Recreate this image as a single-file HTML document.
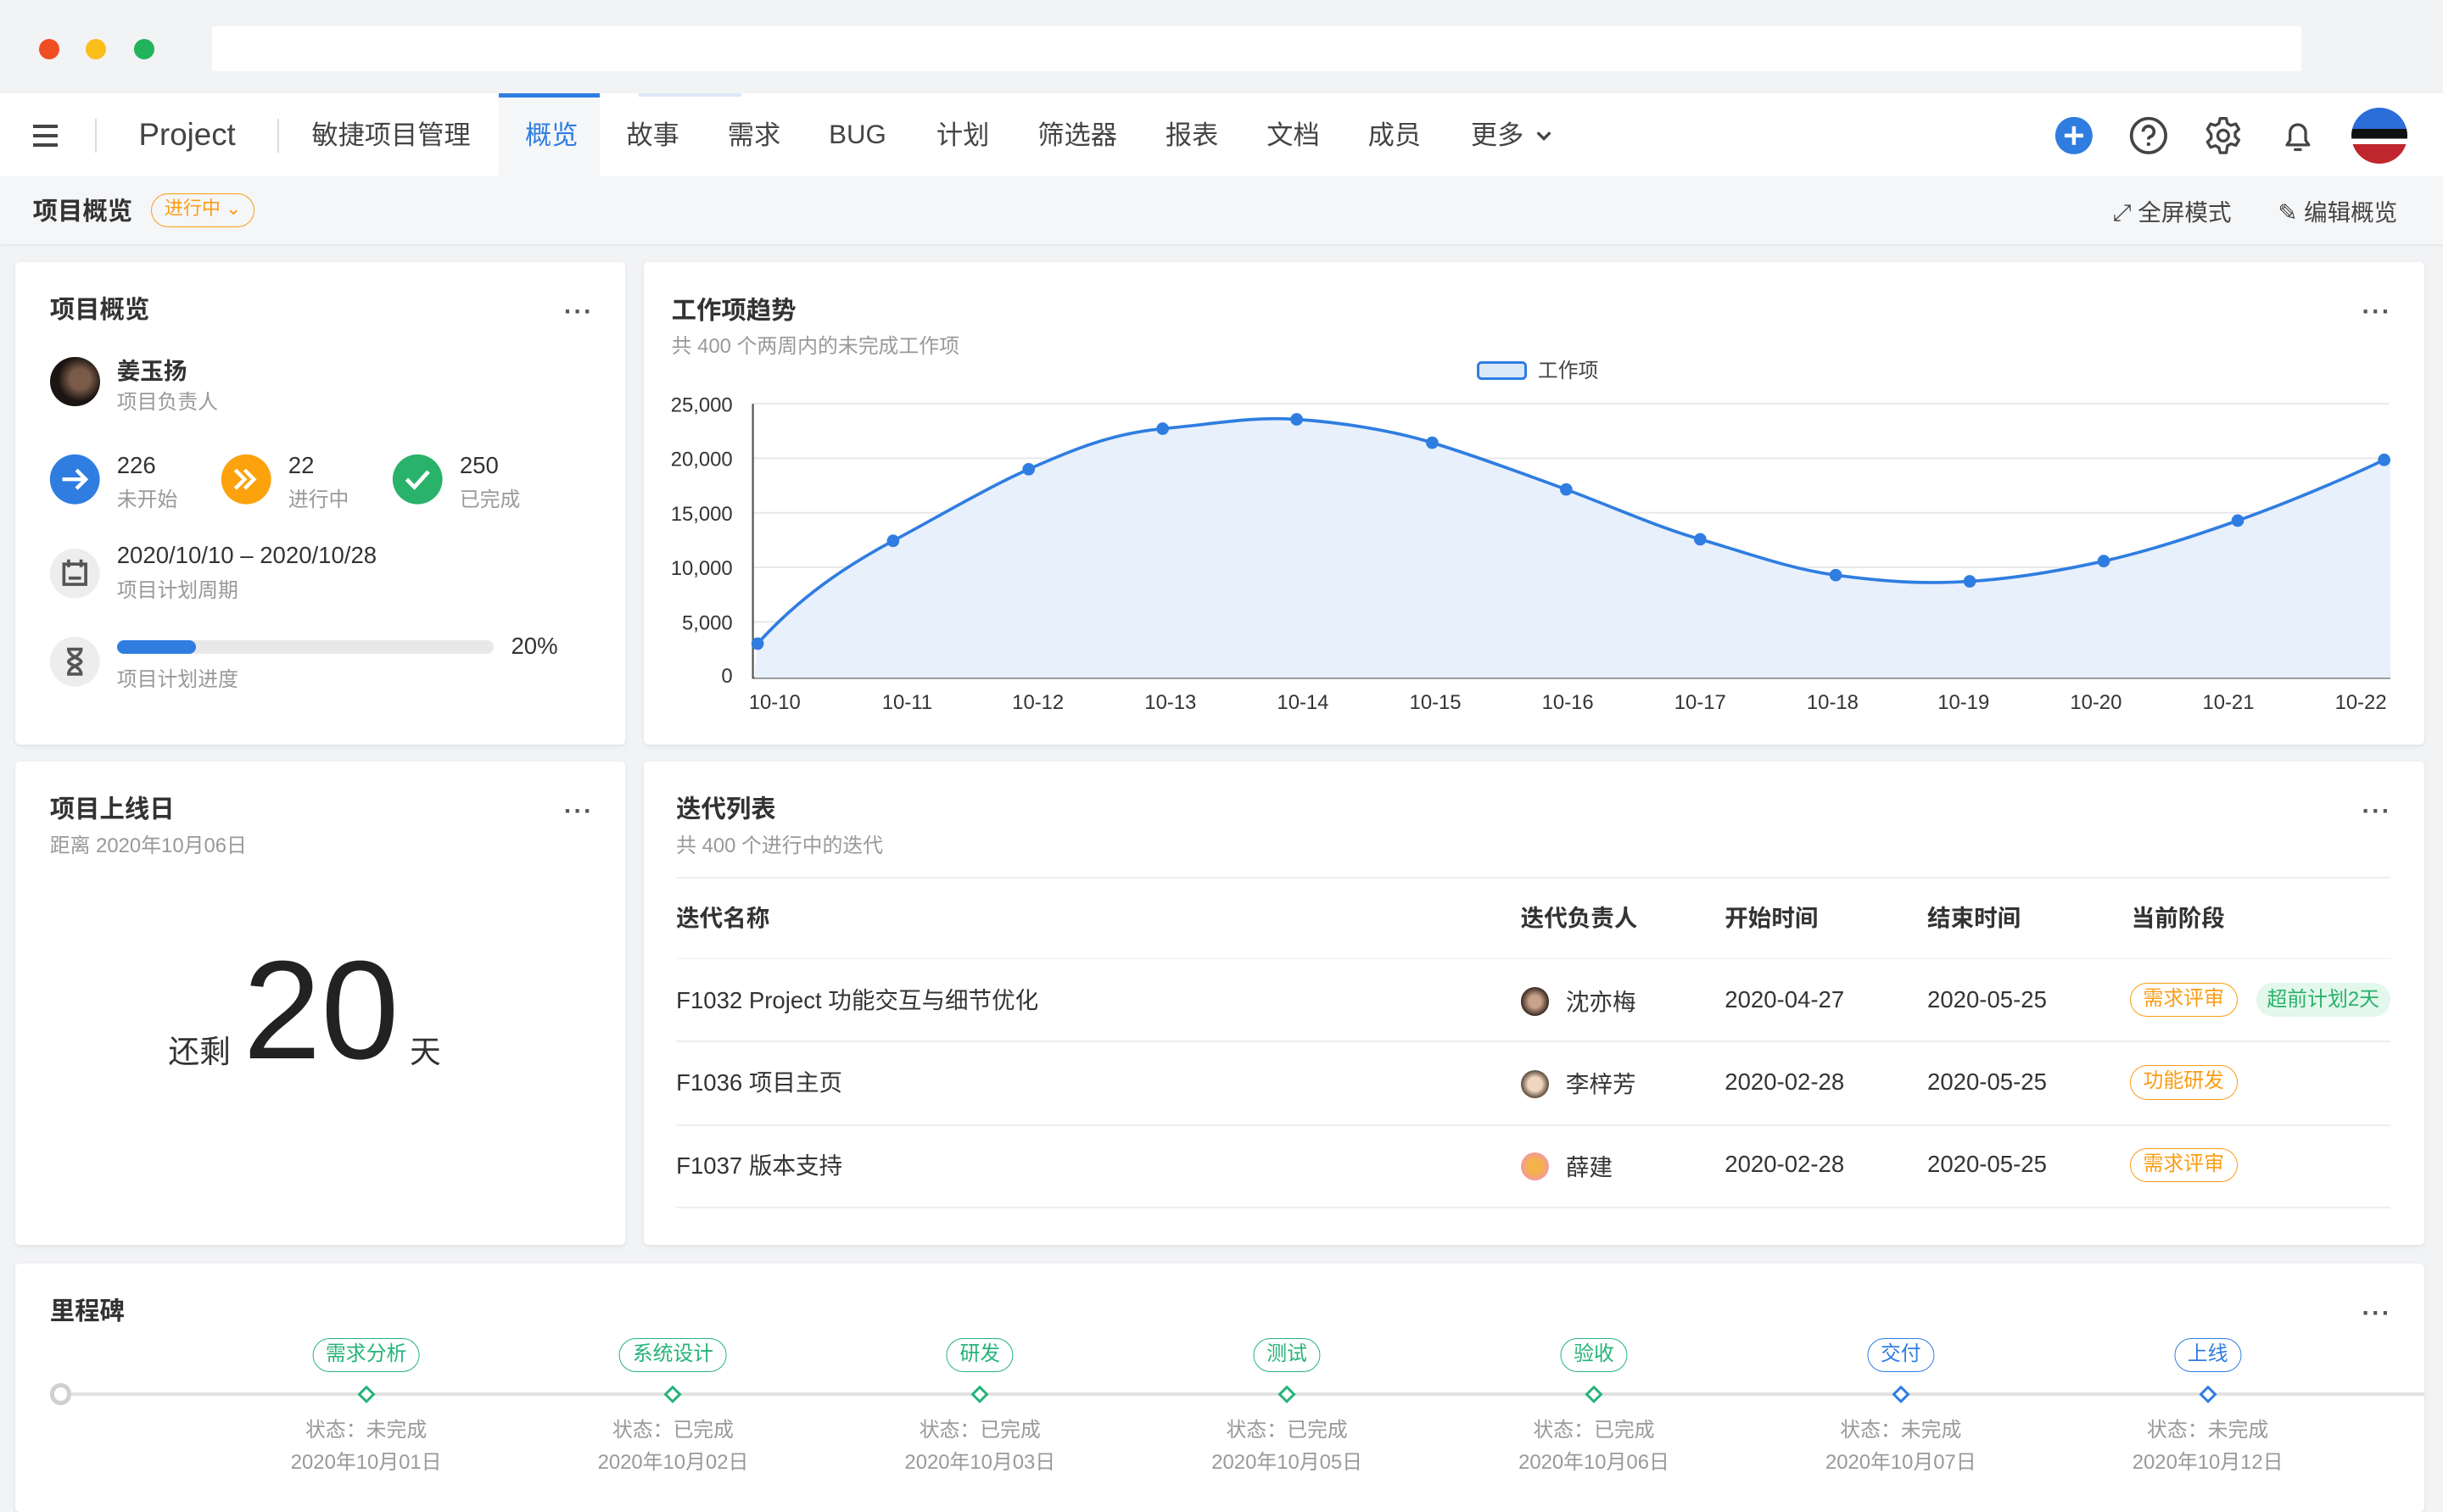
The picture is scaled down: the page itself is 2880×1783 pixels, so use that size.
<!DOCTYPE html>
<html><head><meta charset="utf-8">
<style>
html{zoom:1.83674}
*{box-sizing:border-box;margin:0;padding:0}
body{width:1568px;height:951px;overflow:hidden;background:#f2f3f5;font-family:"Liberation Sans","Noto Sans CJK SC",sans-serif;color:#333;position:relative}
.a{position:absolute}
.card{position:absolute;background:#fff;border-radius:3px;box-shadow:0 1px 3px rgba(0,0,0,.08)}
.dots{position:absolute;font-size:16px;color:#555;letter-spacing:1px;font-weight:bold}
.t{position:absolute;white-space:nowrap}
.sub{color:#999;font-size:13px}
.tag{position:absolute;border:1px solid #fa9d14;color:#fa9d14;border-radius:11px;font-size:13px;height:22px;line-height:20px;padding:0 8px;white-space:nowrap}
.ms{position:absolute;border:1px solid #25b37a;color:#25b37a;border-radius:11px;font-size:13px;height:22px;line-height:20px;padding:0 8px;transform:translateX(-50%);white-space:nowrap;background:#fff}
.ms.b{border-color:#2f7de1;color:#2f7de1}
.dia{position:absolute;width:8px;height:8px;border:2px solid #25b37a;background:#fff;transform:translate(-50%,-50%) rotate(45deg)}
.dia.b{border-color:#2f7de1}
.mt{position:absolute;transform:translateX(-50%);color:#999;font-size:13px;text-align:center;white-space:nowrap;line-height:21px}
</style></head><body>
<div class="a" style="left:25px;top:25px;width:13px;height:13px;border-radius:50%;background:#f04d23"></div>
<div class="a" style="left:55px;top:25px;width:13px;height:13px;border-radius:50%;background:#fbbd18"></div>
<div class="a" style="left:86px;top:25px;width:13px;height:13px;border-radius:50%;background:#22b35c"></div>
<div class="a" style="left:136px;top:17px;width:1341px;height:29px;background:#fff"></div>
<div class="a" style="left:0;top:60px;width:1568px;height:53px;background:#fff"></div>
<div class="a" style="left:21px;top:80px;width:16px;height:2px;background:#444;box-shadow:0 6px 0 #444,0 12px 0 #444"></div>
<div class="a" style="left:61px;top:76px;width:1px;height:22px;background:#ddd"></div>
<div class="t" style="left:89px;top:75px;font-size:20px;color:#444">Project</div>
<div class="a" style="left:178px;top:76px;width:1px;height:22px;background:#ddd"></div>
<div class="a" style="left:320px;top:60px;width:65px;height:53px;background:#f5f6f8;border-top:3px solid #2f7de1"></div>
<div class="a" style="left:410px;top:60px;width:66px;height:2px;background:#dce8f8"></div>
<div class="t" style="top:73px;font-size:17px;color:#444;left:200px">敏捷项目管理</div>
<div class="t" style="top:73px;font-size:17px;color:#2f7de1;left:337px">概览</div>
<div class="t" style="top:73px;font-size:17px;color:#444;left:402px">故事</div>
<div class="t" style="top:73px;font-size:17px;color:#444;left:467px">需求</div>
<div class="t" style="top:77px;font-size:17px;color:#444;left:532px">BUG</div>
<div class="t" style="top:73px;font-size:17px;color:#444;left:601px">计划</div>
<div class="t" style="top:73px;font-size:17px;color:#444;left:666px">筛选器</div>
<div class="t" style="top:73px;font-size:17px;color:#444;left:748px">报表</div>
<div class="t" style="top:73px;font-size:17px;color:#444;left:813px">文档</div>
<div class="t" style="top:73px;font-size:17px;color:#444;left:878px">成员</div>
<div class="t" style="top:73px;font-size:17px;color:#444;left:944px">更多</div>
<svg class="a" style="left:985px;top:81px" width="12" height="12"><path d="M2 4l4 4 4-4" fill="none" stroke="#444" stroke-width="1.8"/></svg>
<svg class="a" style="left:1318px;top:74px" width="26" height="26"><circle cx="13" cy="13" r="12" fill="#2f7de1"/><path d="M13 7v12M7 13h12" stroke="#fff" stroke-width="2.4"/></svg>
<svg class="a" style="left:1366px;top:74px" width="26" height="26"><circle cx="13" cy="13" r="11" fill="none" stroke="#444" stroke-width="2"/><path d="M9.5 10.5a3.5 3.5 0 1 1 4.5 3.3c-.8.3-1 .8-1 1.7" fill="none" stroke="#444" stroke-width="2"/><circle cx="13" cy="18.5" r="1.2" fill="#444"/></svg>
<svg class="a" style="left:1414px;top:74px" width="26" height="26" viewBox="0 0 26 26"><path d="M11 2h4l.7 3.2 2.3 1.3 3.1-1 2 3.4-2.4 2.2v2.6l2.4 2.2-2 3.4-3.1-1-2.3 1.3L15 24h-4l-.7-3.2-2.3-1.3-3.1 1-2-3.4 2.4-2.2v-2.6L2.9 8.9l2-3.4 3.1 1 2.3-1.3z" fill="none" stroke="#444" stroke-width="1.8" stroke-linejoin="round"/><circle cx="13" cy="13" r="3.5" fill="none" stroke="#444" stroke-width="1.8"/></svg>
<svg class="a" style="left:1462px;top:74px" width="26" height="26"><path d="M6 19h14l-2-3v-5a5 5 0 0 0-10 0v5z" fill="none" stroke="#444" stroke-width="1.8" stroke-linejoin="round"/><path d="M10.5 22h5" stroke="#444" stroke-width="1.8"/></svg>
<div class="a" style="left:1509px;top:69px;width:36px;height:36px;border-radius:50%;background:linear-gradient(#2b6ed8 0 38%,#111 38% 55%,#fff 55% 65%,#c0262d 65%)"></div>
<div class="a" style="left:0;top:113px;width:1568px;height:44px;background:#f5f6f8;box-shadow:0 1px 2px rgba(0,0,0,.06)"></div>
<div class="t" style="left:21px;top:123px;font-size:16px;font-weight:bold;color:#333">项目概览</div>
<div class="tag" style="left:97px;top:124px;height:22px;font-size:12px;line-height:18px">进行中 ⌄</div>
<div class="t" style="left:1356px;top:124px;font-size:15px;color:#444">⤢ 全屏模式</div>
<div class="t" style="left:1462px;top:124px;font-size:15px;color:#444">✎ 编辑概览</div>

<div class="card" style="left:10px;top:168px;width:391px;height:310px">
<div class="t" style="left:22px;top:18px;font-size:16px;font-weight:bold">项目概览</div>
<div class="dots" style="left:352px;top:23px">···</div>
<div class="a" style="left:22px;top:61px;width:32px;height:32px;border-radius:50%;background:radial-gradient(circle at 60% 45%,#7a5a48 0 25%,#1a1512 55%)"></div>
<div class="t" style="left:65px;top:58px;font-size:15px;font-weight:bold">姜玉扬</div>
<div class="t sub" style="left:65px;top:79px">项目负责人</div>
<svg class="a" style="left:21px;top:123px" width="34" height="34"><circle cx="17" cy="17" r="16" fill="#2f7de1"/><path d="M9 17h15M18 11l6 6-6 6" fill="none" stroke="#fff" stroke-width="2.4"/></svg>
<div class="t" style="left:65px;top:122px;font-size:15px">226</div><div class="t sub" style="left:65px;top:142px">未开始</div>
<svg class="a" style="left:131px;top:123px" width="34" height="34"><circle cx="17" cy="17" r="16" fill="#fba20d"/><path d="M10 11l6 6-6 6M16 11l6 6-6 6" fill="none" stroke="#fff" stroke-width="2.4"/></svg>
<div class="t" style="left:175px;top:122px;font-size:15px">22</div><div class="t sub" style="left:175px;top:142px">进行中</div>
<svg class="a" style="left:241px;top:123px" width="34" height="34"><circle cx="17" cy="17" r="16" fill="#28b26a"/><path d="M10 17l5 5 9-10" fill="none" stroke="#fff" stroke-width="2.6"/></svg>
<div class="t" style="left:285px;top:122px;font-size:15px">250</div><div class="t sub" style="left:285px;top:142px">已完成</div>
<svg class="a" style="left:21px;top:183px" width="34" height="34"><circle cx="17" cy="17" r="16" fill="#ededed"/><rect x="10" y="11" width="14" height="13" fill="none" stroke="#555" stroke-width="2"/><path d="M13 8v5M21 8v5M13 20h8" stroke="#555" stroke-width="2"/></svg>
<div class="t" style="left:65px;top:180px;font-size:15px">2020/10/10 – 2020/10/28</div>
<div class="t sub" style="left:65px;top:200px">项目计划周期</div>
<svg class="a" style="left:21px;top:240px" width="34" height="34"><circle cx="17" cy="17" r="16" fill="#ededed"/><path d="M12 9h10M12 25h10M13 9c0 5 8 6 8 8s-8 3-8 8M21 9c0 5-8 6-8 8s8 3 8 8" fill="none" stroke="#555" stroke-width="2"/></svg>
<div class="a" style="left:65px;top:243px;width:242px;height:9px;border-radius:5px;background:#e8e8e8"><div style="width:51px;height:9px;border-radius:5px;background:#2f7de1"></div></div>
<div class="t" style="left:318px;top:238px;font-size:15px">20%</div>
<div class="t sub" style="left:65px;top:257px">项目计划进度</div>
</div>

<div class="card" style="left:413px;top:168px;width:1143px;height:310px">
<div class="t" style="left:18px;top:19px;font-size:16px;font-weight:bold">工作项趋势</div>
<div class="t sub" style="left:18px;top:43px">共 400 个两周内的未完成工作项</div>
<div class="dots" style="left:1103px;top:23px">···</div>
<div class="a" style="left:535px;top:64px;width:32px;height:12px;border:2px solid #2f7de1;background:#dbe8fa;border-radius:3px"></div>
<div class="t" style="left:574px;top:59px;font-size:13px;color:#444">工作项</div>
</div>
<svg class="a" style="left:413px;top:168px" width="1143" height="310" font-family="Liberation Sans,sans-serif" font-size="13" fill="#333">
<g stroke="#e6e6e6" stroke-width="1"><path d="M70 91H1120M70 126H1120M70 161H1120M70 196H1120M70 231H1120"/></g>
<path d="M70 91V267H1121" stroke="#555" stroke-width="1.2" fill="none"/>
<g text-anchor="end"><text x="57" y="96">25,000</text><text x="57" y="131">20,000</text><text x="57" y="166">15,000</text><text x="57" y="201">10,000</text><text x="57" y="236">5,000</text><text x="57" y="270">0</text></g>
<g text-anchor="middle"><text x="84" y="287">10-10</text><text x="169" y="287">10-11</text><text x="253" y="287">10-12</text><text x="338" y="287">10-13</text><text x="423" y="287">10-14</text><text x="508" y="287">10-15</text><text x="593" y="287">10-16</text><text x="678" y="287">10-17</text><text x="763" y="287">10-18</text><text x="847" y="287">10-19</text><text x="932" y="287">10-20</text><text x="1017" y="287">10-21</text><text x="1102" y="287">10-22</text></g>
<path d="M73 245 C100 215,130 195,160 179 S220 145,247 133 S300 110,333 107 S390 99,419 101 S480 108,506 116 S565 136,592 146 S650 170,678 178 S735 197,765 201 S820 207,851 205 S910 198,937 192 S995 176,1023 166 S1090 140,1117 127 L1121 127 L1121 267 L71 267Z" fill="#e8f0fb"/>
<path d="M73 245 C100 215,130 195,160 179 S220 145,247 133 S300 110,333 107 S390 99,419 101 S480 108,506 116 S565 136,592 146 S650 170,678 178 S735 197,765 201 S820 207,851 205 S910 198,937 192 S995 176,1023 166 S1090 140,1117 127" fill="none" stroke="#2f7de1" stroke-width="2"/>
<g fill="#2f7de1"><circle cx="73" cy="245" r="4"/><circle cx="160" cy="179" r="4"/><circle cx="247" cy="133" r="4"/><circle cx="333" cy="107" r="4"/><circle cx="419" cy="101" r="4"/><circle cx="506" cy="116" r="4"/><circle cx="592" cy="146" r="4"/><circle cx="678" cy="178" r="4"/><circle cx="765" cy="201" r="4"/><circle cx="851" cy="205" r="4"/><circle cx="937" cy="192" r="4"/><circle cx="1023" cy="166" r="4"/><circle cx="1117" cy="127" r="4"/></g>
</svg>

<div class="card" style="left:10px;top:489px;width:391px;height:310px">
<div class="t" style="left:22px;top:18px;font-size:16px;font-weight:bold">项目上线日</div>
<div class="t sub" style="left:22px;top:43px">距离 2020年10月06日</div>
<div class="dots" style="left:352px;top:23px">···</div>
<div class="t" style="left:98px;top:170px;font-size:20px">还剩</div>
<div class="t" style="left:146px;top:110px;font-size:90px;line-height:100px;color:#222">20</div>
<div class="t" style="left:253px;top:170px;font-size:20px">天</div>
</div>

<div class="card" style="left:413px;top:489px;width:1143px;height:310px">
<div class="t" style="left:21px;top:18px;font-size:16px;font-weight:bold">迭代列表</div>
<div class="t sub" style="left:21px;top:43px">共 400 个进行中的迭代</div>
<div class="dots" style="left:1103px;top:23px">···</div>
<div class="a" style="left:21px;top:74px;width:1100px;height:1px;background:#eee"></div>
<div class="a" style="left:21px;top:126px;width:1100px;height:1px;background:#eee"></div>
<div class="a" style="left:21px;top:179px;width:1100px;height:1px;background:#eee"></div>
<div class="a" style="left:21px;top:233px;width:1100px;height:1px;background:#eee"></div>
<div class="a" style="left:21px;top:286px;width:1100px;height:1px;background:#eee"></div>
<div class="t" style="left:21px;top:88px;font-size:15px;font-weight:bold">迭代名称</div>
<div class="t" style="left:563px;top:88px;font-size:15px;font-weight:bold">迭代负责人</div>
<div class="t" style="left:694px;top:88px;font-size:15px;font-weight:bold">开始时间</div>
<div class="t" style="left:824px;top:88px;font-size:15px;font-weight:bold">结束时间</div>
<div class="t" style="left:955px;top:88px;font-size:15px;font-weight:bold">当前阶段</div>

<div class="t" style="left:21px;top:141px;font-size:15px">F1032 Project 功能交互与细节优化</div>
<div class="a" style="left:563px;top:145px;width:18px;height:18px;border-radius:50%;background:radial-gradient(#c8a28a 30%,#3a2a22 70%)"></div>
<div class="t" style="left:592px;top:142px;font-size:15px">沈亦梅</div>
<div class="t" style="left:694px;top:144px;font-size:15px">2020-04-27</div>
<div class="t" style="left:824px;top:144px;font-size:15px">2020-05-25</div>
<div class="tag" style="left:954px;top:142px">需求评审</div>
<div class="t" style="left:1035px;top:142px;height:22px;line-height:22px;padding:0 7px;border-radius:11px;background:#e3f7ec;color:#28b26a;font-size:13px">超前计划2天</div>

<div class="t" style="left:21px;top:194px;font-size:15px">F1036 项目主页</div>
<div class="a" style="left:563px;top:198px;width:18px;height:18px;border-radius:50%;background:radial-gradient(#f0d6c0 35%,#5a4a3a 70%)"></div>
<div class="t" style="left:592px;top:195px;font-size:15px">李梓芳</div>
<div class="t" style="left:694px;top:197px;font-size:15px">2020-02-28</div>
<div class="t" style="left:824px;top:197px;font-size:15px">2020-05-25</div>
<div class="tag" style="left:954px;top:195px">功能研发</div>

<div class="t" style="left:21px;top:247px;font-size:15px">F1037 版本支持</div>
<div class="a" style="left:563px;top:251px;width:18px;height:18px;border-radius:50%;background:radial-gradient(#f3b34a 35%,#f39a9a 70%)"></div>
<div class="t" style="left:592px;top:248px;font-size:15px">薛建</div>
<div class="t" style="left:694px;top:250px;font-size:15px">2020-02-28</div>
<div class="t" style="left:824px;top:250px;font-size:15px">2020-05-25</div>
<div class="tag" style="left:954px;top:248px">需求评审</div>
</div>

<div class="card" style="left:10px;top:811px;width:1546px;height:160px">
<div class="t" style="left:22px;top:18px;font-size:16px;font-weight:bold">里程碑</div>
<div class="dots" style="left:1506px;top:23px">···</div>
<div class="a" style="left:29px;top:83px;width:1517px;height:2px;background:#e2e2e2"></div>
<div class="a" style="left:22px;top:77px;width:14px;height:14px;border-radius:50%;border:3px solid #d0d0d0;background:#fff"></div>
<div class="ms" style="left:225px;top:48px">需求分析</div><div class="dia" style="left:225px;top:84px"></div><div class="mt" style="left:225px;top:97px">状态：未完成<br>2020年10月01日</div>
<div class="ms" style="left:422px;top:48px">系统设计</div><div class="dia" style="left:422px;top:84px"></div><div class="mt" style="left:422px;top:97px">状态：已完成<br>2020年10月02日</div>
<div class="ms" style="left:619px;top:48px">研发</div><div class="dia" style="left:619px;top:84px"></div><div class="mt" style="left:619px;top:97px">状态：已完成<br>2020年10月03日</div>
<div class="ms" style="left:816px;top:48px">测试</div><div class="dia" style="left:816px;top:84px"></div><div class="mt" style="left:816px;top:97px">状态：已完成<br>2020年10月05日</div>
<div class="ms" style="left:1013px;top:48px">验收</div><div class="dia" style="left:1013px;top:84px"></div><div class="mt" style="left:1013px;top:97px">状态：已完成<br>2020年10月06日</div>
<div class="ms b" style="left:1210px;top:48px">交付</div><div class="dia b" style="left:1210px;top:84px"></div><div class="mt" style="left:1210px;top:97px">状态：未完成<br>2020年10月07日</div>
<div class="ms b" style="left:1407px;top:48px">上线</div><div class="dia b" style="left:1407px;top:84px"></div><div class="mt" style="left:1407px;top:97px">状态：未完成<br>2020年10月12日</div>
</div>
</body></html>
